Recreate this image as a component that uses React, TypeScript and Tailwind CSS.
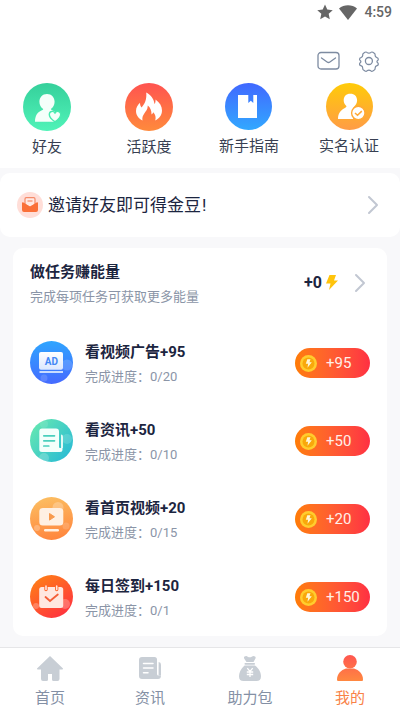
import type { ReactNode } from "react";

function FriendIcon() {
  return (
    <svg width="48" height="48" viewBox="0 0 48 48">
      <defs>
        <linearGradient id="friend" x1="0" y1="0" x2="0" y2="1">
          <stop stopColor="#35d09b" />
          <stop offset="1" stopColor="#50f3b8" />
        </linearGradient>
      </defs>
      <circle cx="24" cy="24" r="24" fill="url(#friend)" />
      <path d="M24 11c4.600 0 7.600 3.400 7.600 7.800 0 3-1.500 5.800-3.800 7.200.3 1 2.600 1.700 4.200 3L32 38.700H12c0-6 2.500-9.200 6-10.900 1.400-.7 2.200-1 2.200-1.800-2.300-1.400-3.800-4.200-3.800-7.200C16.400 14.400 19.400 11 24 11z" fill="#f4fffa" />
      <path d="M32 38.800c-3.400-2.200-5.700-4.500-5.700-7.200 0-3.300 3.800-4.400 5.700-1.600 1.900-2.800 5.700-1.700 5.700 1.600 0 2.700-2.300 5-5.700 7.200z" fill="#f4fffa" stroke="#4aebb0" strokeWidth="1.400" />
    </svg>
  );
}

function FireIcon() {
  return (
    <svg width="48" height="48" viewBox="0 0 48 48">
      <defs>
        <linearGradient id="fire" x1="0" y1="0" x2="0" y2="1">
          <stop stopColor="#ff5350" />
          <stop offset="1" stopColor="#ff8a3c" />
        </linearGradient>
      </defs>
      <circle cx="24" cy="24" r="24" fill="url(#fire)" />
      <path d="M17.500 37.500c-4-2-6.500-5.300-6.500-9.500 0-3.600 1.600-5.600 4-8.200 0 2.200.5 3.700 1.600 4.700C19.800 21 22 16 21.200 9.500c5 2.700 7.800 6.800 8.300 11.500.9-1.200 1.200-2.700 1-4.600C34.800 19.500 37 23.200 37 27.500c0 4.600-2.800 8.200-6.800 10 1-3.200.2-6-2-8.200-.4 1.200-.9 1.800-1.700 2.100.1-3.700-1-6.600-3.700-8.900-.1 4-2 5.800-3.500 7.900-1.600 2.300-2.300 4.300-1.800 7.100z" fill="#fff" />
    </svg>
  );
}

function GuideIcon() {
  return (
    <svg width="48" height="47" viewBox="0 0 48 47">
      <defs>
        <linearGradient id="guide" x1="0" y1="0" x2="0" y2="1">
          <stop stopColor="#4168ff" />
          <stop offset="1" stopColor="#32a8ff" />
        </linearGradient>
      </defs>
      <circle cx="23.500" cy="23.500" r="23.500" fill="url(#guide)" />
      <path d="M13 12h10.300v8l2.500-2.200 2.500 2.200v-8H32v23H13z" fill="#fff" />
    </svg>
  );
}

function VerifyIcon() {
  return (
    <svg width="48" height="47" viewBox="0 0 48 47">
      <defs>
        <linearGradient id="verify" x1="0" y1="0" x2="0" y2="1">
          <stop stopColor="#ffcb08" />
          <stop offset="1" stopColor="#ff9c46" />
        </linearGradient>
      </defs>
      <circle cx="24.500" cy="23.500" r="23.500" fill="url(#verify)" />
      <path d="M25.300 10.700c4.200 0 6.800 2.700 6.800 6.600 0 3-1.300 5-3.300 6.700-1 1-.4 1.500 1 1.900L28 36H13c0-5.500 2.500-8.500 6-10.500 2.800-1.500 3-2 1.700-3.200-1.300-1.300-2-3-2-5 0-3.900 2.400-6.600 6.600-6.600z" fill="#fff" />
      <circle cx="33.300" cy="30" r="6.700" fill="#fff" stroke="#ffa936" strokeWidth="1.400" />
      <path d="M30 30l2.500 2.300 4.300-4.200" fill="none" stroke="#ffa936" strokeWidth="1.500" />
    </svg>
  );
}

function AdIcon() {
  return (
    <svg width="43" height="43" viewBox="0 0 43 43">
      <defs>
        <linearGradient id="ad" x1="0.500" y1="0" x2="0.550" y2="1">
          <stop stopColor="#2fa5ff" />
          <stop offset="1" stopColor="#456aff" />
        </linearGradient>
        <linearGradient id="adScreen" x1="0" y1="0" x2="0" y2="1">
          <stop stopColor="#fff" />
          <stop offset="1" stopColor="#dbe8ff" />
        </linearGradient>
        <clipPath id="adClip"><circle cx="21.500" cy="21.500" r="21.500" /></clipPath>
      </defs>
      <g clipPath="url(#adClip)">
        <rect width="43" height="43" fill="url(#ad)" />
        <circle cx="37" cy="24" r="5.500" fill="#fff" opacity=".15" />
        <circle cx="14" cy="37" r="3.500" fill="#fff" opacity=".15" />
      </g>
      <rect x="9" y="11" width="24" height="17.700" rx="2" fill="url(#adScreen)" />
      <rect x="9.500" y="30" width="23.500" height="2" fill="#c9dcff" />
      <text x="21.300" y="23.500" textAnchor="middle" fill="#4387f5" className="font-['Roboto',sans-serif] text-[10px] font-bold">AD</text>
    </svg>
  );
}

function NewsIcon() {
  return (
    <svg width="43" height="43" viewBox="0 0 43 43">
      <defs>
        <linearGradient id="news" x1="0" y1="0.100" x2="1" y2="0.900">
          <stop stopColor="#67e9b0" />
          <stop offset="1" stopColor="#27b9d6" />
        </linearGradient>
        <clipPath id="newsClip"><circle cx="21.500" cy="21.500" r="21.500" /></clipPath>
      </defs>
      <g clipPath="url(#newsClip)">
        <rect width="43" height="43" fill="url(#news)" />
        <circle cx="37" cy="20" r="5" fill="#fff" opacity=".15" />
        <circle cx="14" cy="39" r="5" fill="#fff" opacity=".2" />
        <circle cx="14" cy="5" r="4" fill="#fff" opacity=".1" />
      </g>
      <path d="M12 9.500h14q3 0 3 3V28q0 1 1 1h2.500v1.500q0 2.500-2.500 2.500H12q-2.700 0-2.700-2.500v-18q0-3 2.700-3z" fill="#f3fffb" />
      <path d="M31 15.500q2 .2 2 2V29h-2z" fill="#e2faf6" />
      <path d="M13.800 16.800h10.700M13.800 21.800h10.700M13.800 27h5" stroke="#4bcfbd" strokeWidth="1.700" strokeLinecap="round" />
    </svg>
  );
}

function VideoIcon() {
  return (
    <svg width="43" height="43" viewBox="0 0 43 43">
      <defs>
        <linearGradient id="video" x1="0.400" y1="0" x2="0.600" y2="1">
          <stop stopColor="#fcbd61" />
          <stop offset="1" stopColor="#ff853d" />
        </linearGradient>
        <clipPath id="videoClip"><circle cx="21.500" cy="21.500" r="21.500" /></clipPath>
      </defs>
      <g clipPath="url(#videoClip)">
        <rect width="43" height="43" fill="url(#video)" />
        <circle cx="28" cy="10.500" r="5.500" fill="#fff" opacity=".25" />
        <circle cx="7" cy="31" r="3" fill="#fff" opacity=".25" />
        <circle cx="36" cy="29" r="3.500" fill="#fff" opacity=".15" />
      </g>
      <rect x="9.300" y="11" width="24" height="17.500" rx="3.500" fill="#fff0e2" />
      <path d="M19.500 16.500l5 3.300-5 3.300z" fill="#f99a4c" stroke="#f99a4c" strokeLinejoin="round" />
      <rect x="14" y="32" width="15" height="2.500" rx="1.200" fill="#fff0e2" />
    </svg>
  );
}

function SignIcon() {
  return (
    <svg width="43" height="43" viewBox="0 0 43 43">
      <defs>
        <linearGradient id="sign" x1="0.200" y1="0.100" x2="0.800" y2="1">
          <stop stopColor="#ff791a" />
          <stop offset="1" stopColor="#ff3040" />
        </linearGradient>
        <clipPath id="signClip"><circle cx="21.500" cy="21.500" r="21.500" /></clipPath>
      </defs>
      <g clipPath="url(#signClip)">
        <rect width="43" height="43" fill="url(#sign)" />
        <circle cx="6" cy="31" r="3" fill="#fff" opacity=".25" />
        <circle cx="35" cy="29" r="5" fill="#fff" opacity=".25" />
      </g>
      <rect x="9.200" y="12" width="24" height="21" rx="2.500" fill="#ffe7e0" />
      <g stroke="#ff6428" strokeWidth="3.400" strokeLinecap="round">
        <path d="M16 12.500v2M26.700 12.500v2" />
      </g>
      <g stroke="#ffe7e0" strokeWidth="1.600" strokeLinecap="round">
        <path d="M16 11v3.500M26.700 11v3.500" />
      </g>
      <path d="M15.500 22l4.500 4 7.800-6.500" fill="none" stroke="#f45e38" strokeWidth="1.800" strokeLinecap="round" />
    </svg>
  );
}

function CoinIcon() {
  return (
    <svg width="17" height="17" viewBox="0 0 17 17">
      <circle cx="8.500" cy="8.500" r="8.500" fill="#ffcd2e" />
      <circle cx="8.500" cy="8.500" r="6" fill="#f9a80b" />
      <path d="M7.300 4.200h3.200L9.500 7.300h2.300l-4.300 5.500.6-4H5.800z" fill="#fff5d5" />
    </svg>
  );
}

function Chevron() {
  return (
    <svg width="12" height="20" viewBox="0 0 12 20" fill="none" stroke="#c2c7d2" strokeWidth="2" strokeLinecap="round" strokeLinejoin="round">
      <path d="M2 2l8 8-8 8" />
    </svg>
  );
}

const shortcuts: { label: string; icon: ReactNode; className: string }[] = [
  { label: "好友", icon: <FriendIcon />, className: "w-[94px]" },
  { label: "活跃度", icon: <FireIcon />, className: "w-[110px]" },
  { label: "新手指南", icon: <GuideIcon />, className: "w-[90px]" },
  { label: "实名认证", icon: <VerifyIcon />, className: "w-[110px]" },
];

const tasks: { title: string; progress: string; reward: string; icon: ReactNode }[] = [
  { title: "看视频广告+95", progress: "0/20", reward: "+95", icon: <AdIcon /> },
  { title: "看资讯+50", progress: "0/10", reward: "+50", icon: <NewsIcon /> },
  { title: "看首页视频+20", progress: "0/15", reward: "+20", icon: <VideoIcon /> },
  { title: "每日签到+150", progress: "0/1", reward: "+150", icon: <SignIcon /> },
];

const tabs: { label: string; active?: boolean; icon: ReactNode }[] = [
  {
    label: "首页",
    icon: (
      <svg width="28" height="28" viewBox="0 0 28 28" fill="#c8ced5">
        <path d="M14 2L27 14.500q.4 1-1 1h-2.500V25q0 2-2 2H17.500q-1.500 0-1.500-1.500V20h-4v5.500q0 1.500-1.500 1.500H7q-2 0-2-2v-9.500H2q-1.400 0-1-1z" />
      </svg>
    ),
  },
  {
    label: "资讯",
    icon: (
      <svg width="28" height="28" viewBox="0 0 28 28">
        <path d="M6 3h12.500q2.500 0 2.500 2.500V20q0 1.500 1.500 1.500H25q0 3.500-3 3.500H6q-3 0-3-3V6q0-3 3-3z" fill="#c8ced5" />
        <path d="M22.600 8q2.400.2 2.400 2.500v11h-2.400z" fill="#c8ced5" />
        <path d="M7.500 9.500h9.500M7.500 14h9.500M7.500 18.700h4.500" stroke="#fff" strokeWidth="1.500" strokeLinecap="round" />
      </svg>
    ),
  },
  {
    label: "助力包",
    icon: (
      <svg width="28" height="28" viewBox="0 0 28 28">
        <path d="M8.500 2.500q2-1 3.200.2 2 1.300 4 0Q17.500 1.500 19 2.500q1.200.8.300 2.300L17.500 8h-7L8.300 4.800Q7.500 3.300 8.500 2.500z" fill="#c8ced5" />
        <rect x="8.500" y="9" width="10.500" height="1.700" rx=".8" fill="#c8ced5" />
        <path d="M8.500 11.500h10.500c4.500 3.500 6 7.500 6 10.700 0 3.300-1.700 4.800-4.500 4.800h-13C4.700 27 3 25.500 3 22.200c0-3.200 1.500-7.200 5.500-10.700z" fill="#c8ced5" />
        <path d="M11.300 14.200l2.700 3.300 2.700-3.300M10.800 18h6.400M10.800 20.500h6.400M14 17.500v5.500" fill="none" stroke="#fff" strokeWidth="1.300" />
      </svg>
    ),
  },
  {
    label: "我的",
    active: true,
    icon: (
      <svg width="28" height="28" viewBox="0 0 28 28">
        <defs>
          <linearGradient id="mine" x1="0" y1="1" x2="0" y2="27" gradientUnits="userSpaceOnUse">
            <stop stopColor="#ff5650" />
            <stop offset="1" stopColor="#ff8840" />
          </linearGradient>
        </defs>
        <g fill="url(#mine)">
          <circle cx="14" cy="7.800" r="6.800" />
          <path d="M10 14.500h8c5 1.500 9 5.500 9 11 0 1-.5 1.500-1.500 1.500h-23C1.500 27 1 26.500 1 25.500c0-5.500 4-9.500 9-11z" />
        </g>
      </svg>
    ),
  },
];

export default function App() {
  return (
    <div className="flex h-[711px] w-[400px] flex-col overflow-hidden bg-[#f8f8fa] font-['Roboto','Noto_Sans_CJK_SC',sans-serif] text-[#1c2540]">
      <header className="h-[168px] shrink-0 bg-white">
        <div className="flex h-6 items-center justify-end pr-2 text-[#666]">
          <svg width="16" height="16" viewBox="0 0 24 24" fill="currentColor" className="mr-1.5">
            <path d="M12 .8l3.400 7.500 8.200.9-6.100 5.500 1.700 8.100-7.200-4.100-7.200 4.100 1.700-8.100L.4 9.200l8.200-.9z" />
          </svg>
          <svg width="18" height="15" viewBox="0 0 18 15" fill="currentColor" className="mr-[7px]">
            <path d="M9 15L0 3.500C5-.8 13-.8 18 3.500z" />
          </svg>
          <span className="text-sm leading-6 font-medium">4:59</span>
        </div>
        <div className="flex h-[59px] items-center justify-end gap-[18px] pt-[15px] pr-5 text-[#7d8ba1]">
          <svg width="24" height="20" viewBox="0 0 24 20" fill="none" stroke="currentColor" strokeWidth="1.300" strokeLinecap="round" strokeLinejoin="round">
            <rect x="2" y="1.500" width="21" height="16.500" rx="3" />
            <path d="M5.500 7l5.600 4q1.400 1 2.800 0l5.600-4" />
          </svg>
          <svg width="22" height="22" viewBox="0 0 22 22" fill="none" stroke="currentColor" strokeWidth="1.300" strokeLinejoin="round">
            <path d="M6.700 1.900Q8 1.100 8.900 2q2.100 1.500 4.200 0 .9-.9 2.200-.1l1.500.9q1.100.7.900 1.900-.1 2.400 2 2.900 1.100.1 1.400 1.300.3 1.100-.6 1.800-1.600 1.300 0 2.600.9.700.6 1.800-.3 1.200-1.400 1.300-2.100.5-2 2.900.2 1.200-.9 1.900l-1.500.9q-1.300.8-2.200-.1-2.100-1.500-4.200 0-.9.900-2.200.1l-1.500-.9q-1.100-.7-.9-1.900.1-2.400-2-2.900-1.100-.1-1.400-1.300-.3-1.100.6-1.800 1.600-1.300 0-2.600-.9-.7-.6-1.800.3-1.200 1.400-1.300 2.100-.5 2-2.900-.2-1.200.9-1.900z" transform="translate(.8 .6) scale(.92)" />
            <circle cx="10.900" cy="11" r="3.500" />
          </svg>
        </div>
        <div className="flex">
          {shortcuts.map((s) => (
            <div key={s.label} className={s.className + " flex shrink-0 flex-col items-center"}>
              {s.icon}
              <span className="mt-[5px] text-[15px] leading-[22px] text-[#383f52]">{s.label}</span>
            </div>
          ))}
        </div>
      </header>

      <div className="mt-[5px] flex h-16 shrink-0 items-center rounded-[10px] bg-white pr-[21px] pl-[17px]">
        <svg width="26" height="26" viewBox="0 0 26 26">
          <circle cx="13" cy="13" r="13" fill="#ffded8" />
          <path d="M8 12.500V7q0-1.300 1.300-1.300h7.400Q18 5.700 18 7v5.500L13 15z" fill="#ffe9e3" stroke="#f58a68" strokeWidth="1.200" />
          <path d="M10.500 9h5" stroke="#f58a68" strokeWidth="1.200" />
          <path d="M5 11.200q0-1.400 1.500-.7L13 14.700l6.500-4.200q1.500-.7 1.500.7V18q0 2-2 2H7q-2 0-2-2z" fill="#fa7038" />
        </svg>
        <span className="ml-[5px] flex-1 text-[17px] leading-6">
          邀请好友即可得金豆<span className="ml-px">!</span>
        </span>
        <Chevron />
      </div>

      <main className="mx-[13px] mt-[11px] h-[388px] shrink-0 rounded-[10px] bg-white px-[17px]">
        <div className="flex h-[75px] items-start justify-between pt-[13px]">
          <div>
            <h2 className="text-[15px] leading-[22px] font-bold">做任务赚能量</h2>
            <p className="mt-1 text-[13px] leading-5 text-[#8b95a7]">完成每项任务可获取更多能量</p>
          </div>
          <div className="flex h-11 items-center pr-1">
            <span className="text-base leading-5 font-bold">+0</span>
            <svg width="12" height="15" viewBox="0 0 12 15" className="mr-4 mb-0.5 ml-1">
              <path d="M3.500 0H10L8 5.500h4L3 15l1.500-6.500H0z" fill="#ffc40c" />
            </svg>
            <Chevron />
          </div>
        </div>
        {tasks.map((t) => (
          <div key={t.title} className="flex h-[78px] items-center">
            {t.icon}
            <div className="ml-3 flex-1 pt-[3px]">
              <h3 className="text-[15px] leading-[22px] font-bold">{t.title}</h3>
              <p className="mt-1 text-[13px] leading-5 text-[#8b95a7]">完成进度：{t.progress}</p>
            </div>
            <button className="mt-0.5 flex h-[30px] w-[75px] items-center rounded-full bg-linear-to-r from-[#ff7c04] to-[#ff2f42] pl-[5px] text-[15px] text-[#fff0e8]">
              <CoinIcon />
              <span className="ml-[9px]">{t.reward}</span>
            </button>
          </div>
        ))}
      </main>

      <nav className="mt-[11px] grid h-16 shrink-0 grid-cols-4 border-t border-[#e6e6e8] bg-white">
        {tabs.map((t) => (
          <div key={t.label} className="flex flex-col items-center pt-[6px]">
            {t.icon}
            <span className={t.active ? "mt-[5px] text-[15px] leading-[22px] text-[#f98248]" : "mt-[5px] text-[15px] leading-[22px] text-[#8490a5]"}>
              {t.label}
            </span>
          </div>
        ))}
      </nav>
    </div>
  );
}
